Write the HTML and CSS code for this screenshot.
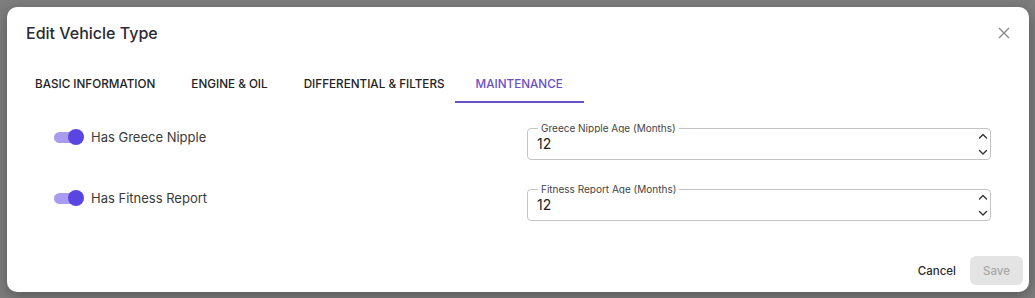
FILE: index.html
```html
<!doctype html>
<html lang="en">
    <head>
        <meta charset="utf-8">
        <meta name="viewport" content="width=device-width, initial-scale=1">
        <title>Edit Vehicle Type</title>
        <link rel="stylesheet" href="styles.css">
    </head>
    <body>
        <div class="dialogo">
            <header class="dialogo-cabecera">
                <h2>Edit Vehicle Type</h2>
                <button class="cerrar" aria-label="Close">
                    <svg width="12" height="12" viewBox="0 0 12 12">
                        <path d="M1 1 L11 11 M11 1 L1 11" stroke="#8a8a8a" stroke-width="1.4" fill="none"/>
                    </svg>
                </button>
            </header>

            <nav class="pestanas">
                <button class="pestana">Basic Information</button>
                <button class="pestana">Engine &amp; Oil</button>
                <button class="pestana pestana-diff">Differential &amp; Filters</button>
                <button class="pestana activa">Maintenance</button>
            </nav>

            <div class="contenido">
                <div class="fila">
                    <label class="interruptor">
                        <span class="pista"><span class="pulgar"></span></span>
                        Has Greece Nipple
                    </label>
                    <fieldset class="campo">
                        <legend>Greece Nipple Age (Months)</legend>
                        <div class="campo-fila">
                            <input type="number" value="12">
                            <svg class="flechas" width="10" height="26" viewBox="0 0 10 26">
                                <path d="M1.5 5 L5 1.5 L8.5 5 M1.5 17.5 L5 21 L8.5 17.5" stroke="#333" stroke-width="1.4" fill="none" stroke-linecap="round" stroke-linejoin="round"/>
                            </svg>
                        </div>
                    </fieldset>
                </div>
                <div class="fila">
                    <label class="interruptor">
                        <span class="pista"><span class="pulgar"></span></span>
                        Has Fitness Report
                    </label>
                    <fieldset class="campo">
                        <legend>Fitness Report Age (Months)</legend>
                        <div class="campo-fila">
                            <input type="number" value="12">
                            <svg class="flechas" width="10" height="26" viewBox="0 0 10 26">
                                <path d="M1.5 5 L5 1.5 L8.5 5 M1.5 17.5 L5 21 L8.5 17.5" stroke="#333" stroke-width="1.4" fill="none" stroke-linecap="round" stroke-linejoin="round"/>
                            </svg>
                        </div>
                    </fieldset>
                </div>
            </div>

            <footer class="dialogo-pie">
                <button class="boton-cancelar">Cancel</button>
                <button class="boton-guardar" disabled>Save</button>
            </footer>
        </div>
    </body>
</html>
```

FILE: styles.css
```css
:root {
    --color-primario: #5b45e0;
    --color-primario-claro: #a99cef;
    --color-activo: #6a50c8;
    --color-texto: #2a2a30;
}

body {
    font-family: Inter, "Noto Sans", sans-serif;
    margin: 0;
    padding: 7px;
    background-color: #7d7d7d;
}

button {
    font-family: inherit;
    border: none;
    background: none;
    cursor: pointer;
}

.dialogo {
    width: 1022px;
    height: 285px;
    background-color: white;
    border-radius: 10px;
    box-shadow: 0 4px 14px rgba(0, 0, 0, 0.3);
    display: flex;
    flex-direction: column;
}

.dialogo-cabecera {
    display: flex;
    justify-content: space-between;
    align-items: center;
    padding: 14px 16px 0 19px;
}

.dialogo-cabecera h2 {
    margin: 0;
    font-size: 16px;
    line-height: 24px;
    font-weight: 500;
    color: var(--color-texto);
}

.cerrar {
    padding: 0;
    width: 12px;
    height: 12px;
    display: flex;
    margin-right: 3px;
}

.pestanas {
    display: flex;
    margin-top: 18px;
    padding-left: 10px;
}

.pestana {
    height: 40px;
    padding: 3px 18px 0;
    font-size: 11.7px;
    font-weight: 500;
    text-transform: uppercase;
    color: #222;
    border-bottom: 2px solid transparent;
}

.pestana-diff {
    padding-right: 10px;
}

.pestana.activa {
    padding: 3px 21px 0;
    color: var(--color-activo);
    border-bottom-color: var(--color-activo);
}

.contenido {
    flex: 1;
    padding: 20px 38px 0 47px;
    display: flex;
    flex-direction: column;
    gap: 24px;
}

.fila {
    display: grid;
    grid-template-columns: 1fr 464px;
    align-items: start;
}

.interruptor {
    display: flex;
    align-items: center;
    gap: 8px;
    padding-top: 4px;
    line-height: 20px;
    font-size: 13px;
    color: #3a3a3a;
}

.pista {
    width: 29px;
    height: 11px;
    border-radius: 6px;
    background-color: var(--color-primario-claro);
    display: flex;
    align-items: center;
    justify-content: flex-end;
}

.pulgar {
    width: 16px;
    height: 16px;
    border-radius: 50%;
    background-color: var(--color-primario);
    margin-right: -1px;
}

.campo {
    margin: 0;
    padding: 0 2px 0 9px;
    border: 1px solid #c4c4c4;
    border-radius: 4px;
    min-width: 0;
}

.campo legend {
    margin-left: 1px;
    padding: 0 3px;
    font-size: 10px;
    line-height: 10px;
    color: #444;
}

.campo-fila {
    display: flex;
    align-items: flex-start;
}

.campo input {
    flex: 1;
    min-width: 0;
    border: none;
    outline: none;
    padding: 0 0 6px 0;
    height: 20px;
    font-family: inherit;
    font-size: 14px;
    color: #222;
    -moz-appearance: textfield;
}

.campo input::-webkit-inner-spin-button,
.campo input::-webkit-outer-spin-button {
    -webkit-appearance: none;
    margin: 0;
}

.flechas {
    flex: none;
}

.dialogo-pie {
    display: flex;
    justify-content: flex-end;
    align-items: center;
    gap: 4px;
    padding: 0 6px 7px 0;
}

.boton-cancelar {
    padding: 0 10px;
    height: 29px;
    font-size: 11.5px;
    font-weight: 500;
    color: var(--color-texto);
}

.boton-guardar {
    width: 53px;
    height: 29px;
    border-radius: 6px;
    font-size: 11.5px;
    font-weight: 500;
    background-color: #e4e4e4;
    color: #a8a8a8;
    cursor: default;
}
```
